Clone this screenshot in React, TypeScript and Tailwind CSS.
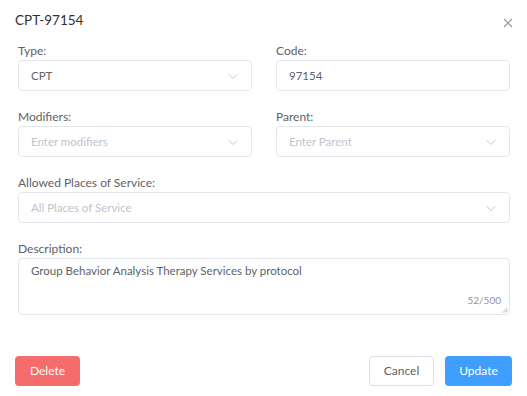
import React from "react";

const Chevron = () => (
  <svg width="12" height="12" viewBox="0 0 12 12" fill="none" className="text-[#c0c4cc]">
    <path d="M2 4.5l4 4 4-4" stroke="currentColor" strokeWidth="1" strokeLinecap="round" strokeLinejoin="round" />
  </svg>
);

const Select: React.FC<{ value?: string; placeholder?: string }> = ({ value, placeholder }) => (
  <div className="h-[31px] border border-[#e4e7ed] rounded-[4px] flex items-center justify-between pl-[12px] pr-[12px] text-[11.5px]">
    {value ? (
      <span className="text-[#606266]">{value}</span>
    ) : (
      <span className="text-[#c0c4cc]">{placeholder}</span>
    )}
    <Chevron />
  </div>
);

const Label: React.FC<{ children: React.ReactNode }> = ({ children }) => (
  <div className="h-[18px] text-[12px] leading-[18px] text-[#606266]">{children}</div>
);

const App: React.FC = () => {
  return (
    <div className="w-[527px] h-[396px] bg-white relative" style={{ fontFamily: "Lato, 'Open Sans', sans-serif" }}>
      <div className="flex items-center justify-between pl-[15px] pr-[14px] pt-[10px] h-[31px]">
        <h1 className="text-[13.5px] text-[#303133]">CPT-97154</h1>
        <svg width="10" height="10" viewBox="0 0 10 10" className="text-[#909399] mt-[4px]">
          <path d="M1 1l8 8M9 1l-8 8" stroke="currentColor" strokeWidth="1.1" />
        </svg>
      </div>

      <div className="pl-[18px] pr-[17px] pt-[11px] flex flex-col gap-[17px]">
        <div className="grid grid-cols-2 gap-x-[24px]">
          <div>
            <Label>Type:</Label>
            <Select value="CPT" />
          </div>
          <div>
            <Label>Code:</Label>
            <div className="h-[31px] border border-[#e4e7ed] rounded-[4px] flex items-center pl-[12px] text-[11.5px] text-[#606266]">
              97154
            </div>
          </div>
        </div>

        <div className="grid grid-cols-2 gap-x-[24px]">
          <div>
            <Label>Modifiers:</Label>
            <Select placeholder="Enter modifiers" />
          </div>
          <div>
            <Label>Parent:</Label>
            <Select placeholder="Enter Parent" />
          </div>
        </div>

        <div>
          <Label>Allowed Places of Service:</Label>
          <Select placeholder="All Places of Service" />
        </div>

        <div>
          <Label>Description:</Label>
          <div className="relative h-[57px] border border-[#e4e7ed] rounded-[4px] pl-[12px] pt-[3px] text-[11.5px] text-[#606266]">
            Group Behavior Analysis Therapy Services by protocol
            <span className="absolute right-[8px] bottom-[6px] text-[10px] text-[#909399]">52/500</span>
            <svg width="6" height="6" viewBox="0 0 6 6" className="absolute right-[1px] bottom-[1px] text-[#909399]">
              <path d="M5.5 1L1 5.5M5.5 3.5L3.5 5.5" stroke="currentColor" strokeWidth="0.8" />
            </svg>
          </div>
        </div>
      </div>

      <div className="flex items-center justify-between pl-[15px] pr-[15px] mt-[41px]">
        <button className="h-[30px] w-[65px] rounded-[4px] bg-[#f56c6c] text-white text-[12px]">Delete</button>
        <div className="flex gap-[11px]">
          <button className="h-[30px] w-[65px] rounded-[4px] border border-[#dcdfe6] bg-white text-[#606266] text-[12px]">Cancel</button>
          <button className="h-[30px] w-[67px] rounded-[4px] bg-[#409eff] text-white text-[12px]">Update</button>
        </div>
      </div>
    </div>
  );
};

export default App;
